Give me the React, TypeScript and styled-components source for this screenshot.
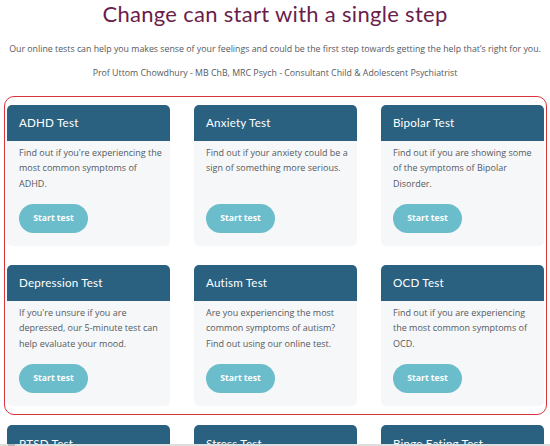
import React from 'react';
import styled, { createGlobalStyle } from 'styled-components';

const GlobalStyle = createGlobalStyle`
  html, body {
    margin: 0;
    padding: 0;
    background: #ffffff;
    overflow: hidden;
  }
  body {
    font-family: 'Open Sans', 'Noto Sans', sans-serif;
  }
`;

const Page = styled.div`
  position: relative;
  width: 550px;
  height: 446px;
  overflow: hidden;
  display: flex;
  flex-direction: column;
  align-items: center;
`;

const Title = styled.h1`
  margin: 0;
  font-family: 'Lato', 'Noto Sans', sans-serif;
  font-weight: 400;
  font-size: 22px;
  line-height: 28px;
  color: #6b1d4c;
  letter-spacing: 0.3px;
`;

const Lead = styled.p`
  margin: 14px 0 0;
  font-size: 8.8px;
  line-height: 14px;
  color: #555a5f;
  text-align: center;
  white-space: nowrap;
`;

const Byline = styled(Lead)`
  margin-top: 10px;
`;

const Highlight = styled.div`
  margin-top: 16px;
  width: 543px;
  box-sizing: border-box;
  border: 1.5px solid #d8343c;
  border-radius: 10px;
  padding: 7.5px 2px 8.5px 2.5px;
`;

const Grid = styled.div`
  display: grid;
  grid-template-columns: repeat(3, 163px);
  column-gap: 24px;
  row-gap: 19px;
`;

const Overflow = styled(Grid)`
  margin-top: 10px;
  width: 537px;
  margin-left: 1px;
`;

const Card = styled.div`
  display: flex;
  flex-direction: column;
  border-radius: 5px;
  overflow: hidden;
  background: #f5f7f9;
  height: 141px;
`;

const CardHead = styled.div`
  height: 36px;
  flex: none;
  background: #2a6180;
  color: #ffffff;
  font-family: 'Lato', 'Noto Sans', sans-serif;
  font-size: 11.6px;
  letter-spacing: 0.2px;
  display: flex;
  align-items: center;
  padding: 0 12px;
`;

const CardBody = styled.div`
  flex: 1;
  display: flex;
  flex-direction: column;
  padding: 4.5px 6px 13px 12px;
`;

const CardText = styled.p`
  margin: 0;
  flex: 1;
  font-size: 9px;
  line-height: 15.3px;
  color: #555a5f;
`;

const StartButton = styled.button`
  align-self: flex-start;
  width: 69px;
  height: 29px;
  border: none;
  border-radius: 15px;
  background: #6bbdcc;
  color: #ffffff;
  font-family: 'Open Sans', sans-serif;
  font-weight: 700;
  font-size: 8.6px;
  padding: 0;
  cursor: pointer;
`;

// thin scrollbar strip visible along the bottom edge of the capture
const ScrollStrip = styled.div`
  position: absolute;
  left: 0;
  right: 0;
  bottom: 0;
  height: 2px;
  background: #dedede;

  &::before {
    content: '';
    position: absolute;
    left: 8px;
    top: 0;
    width: 7px;
    height: 2px;
    background: #b5b5b5;
  }
`;

const tests = [
  { title: 'ADHD Test', text: "Find out if you're experiencing the most common symptoms of ADHD." },
  { title: 'Anxiety Test', text: 'Find out if your anxiety could be a sign of something more serious.' },
  { title: 'Bipolar Test', text: 'Find out if you are showing some of the symptoms of Bipolar Disorder.' },
  { title: 'Depression Test', text: "If you're unsure if you are depressed, our 5-minute test can help evaluate your mood." },
  { title: 'Autism Test', text: 'Are you experiencing the most common symptoms of autism? Find out using our online test.' },
  { title: 'OCD Test', text: 'Find out if you are experiencing the most common symptoms of OCD.' },
];

const more = ['PTSD Test', 'Stress Test', 'Binge Eating Test'];

const TestCard = ({ title, text }: { title: string; text?: string }) => (
  <Card>
    <CardHead>{title}</CardHead>
    <CardBody>
      <CardText>{text}</CardText>
      <StartButton>Start test</StartButton>
    </CardBody>
  </Card>
);

export default function App() {
  return (
    <>
      <GlobalStyle />
      <Page>
        <Title>Change can start with a single step</Title>
        <Lead>
          Our online tests can help you makes sense of your feelings and could be the first step towards getting the help that’s right for you.
        </Lead>
        <Byline>Prof Uttom Chowdhury - MB ChB, MRC Psych - Consultant Child &amp; Adolescent Psychiatrist</Byline>
        <Highlight>
          <Grid>
            {tests.map((t) => (
              <TestCard key={t.title} title={t.title} text={t.text} />
            ))}
          </Grid>
        </Highlight>
        <Overflow>
          {more.map((m) => (
            <TestCard key={m} title={m} />
          ))}
        </Overflow>
        <ScrollStrip />
      </Page>
    </>
  );
}
